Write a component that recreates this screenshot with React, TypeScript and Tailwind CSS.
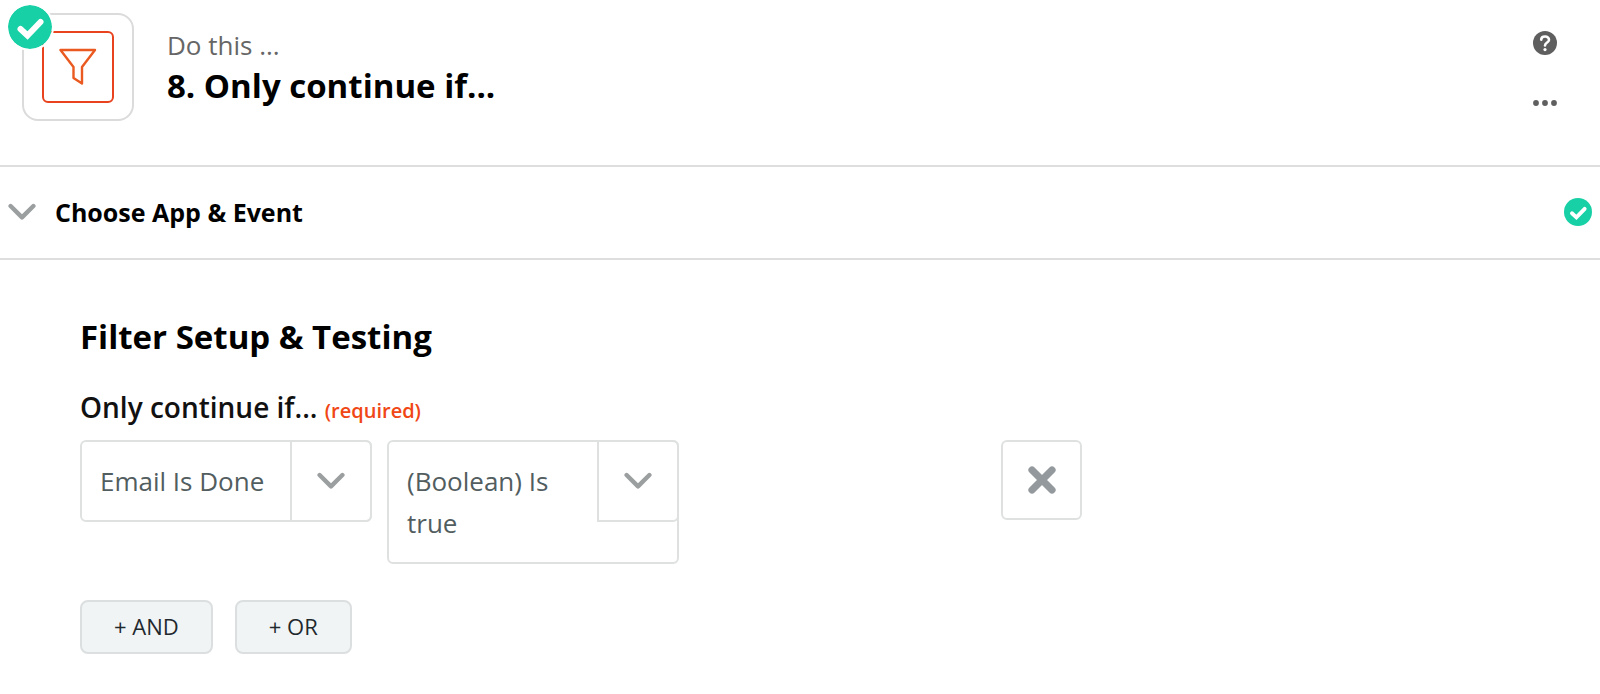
import React from "react";

function CheckBadge({ className }: { className: string }) {
  return (
    <svg viewBox="0 0 44 44" className={className} role="img" aria-label="Complete">
      <circle cx="22" cy="22" r="22" fill="#18d0a6" />
      <path
        d="M12.5 24l7 6.5L32.5 17"
        fill="none"
        stroke="#fff"
        strokeWidth="6"
        strokeLinecap="round"
        strokeLinejoin="miter"
      />
    </svg>
  );
}

function Chevron() {
  return (
    <svg viewBox="0 0 28 18" className="w-7 shrink-0" aria-hidden="true">
      <path
        d="M2.6 3L14 14.4L25.4 3"
        fill="none"
        stroke="#9c9fa0"
        strokeWidth="4.4"
        strokeLinecap="round"
        strokeLinejoin="round"
      />
    </svg>
  );
}

function FilterSelect({ label, options }: { label: string; options: string[] }) {
  return (
    <div className="relative">
      <select
        aria-label={label}
        className="block w-full appearance-none whitespace-normal rounded-md border-2 border-[#dfe1e1] bg-white py-[18px] pr-[100px] pl-[18px] text-[26px] leading-[42px] text-[#525d60]"
      >
        {options.map((option) => (
          <option key={option}>{option}</option>
        ))}
      </select>
      {/* arrow cell, keeps one row's height when the value wraps */}
      <span className="pointer-events-none absolute top-0 right-0 flex size-[82px] items-center justify-center rounded-r-md border-2 border-[#dfe1e1]">
        <Chevron />
      </span>
    </div>
  );
}

export default function App() {
  return (
    <main className="min-h-screen bg-white font-['Open_Sans',sans-serif] text-black">
      <header className="flex items-start border-b-2 border-[#dedede] pt-[13px] pr-[43px] pb-11 pl-[22px]">
        <div className="relative flex h-[108px] w-28 shrink-0 items-center justify-center rounded-2xl border-2 border-[#dbdbdb]">
          <div className="flex size-[72px] items-center justify-center rounded-md border-2 border-[#e8421e]">
            <svg viewBox="0 0 38 38" className="size-[38px]" aria-hidden="true">
              <path
                d="M1.5 2H36L23 19V35.5L14.5 30V19Z"
                fill="none"
                stroke="#ea5a20"
                strokeWidth="2.4"
                strokeLinejoin="round"
              />
            </svg>
          </div>
          <CheckBadge className="absolute -top-3 -left-[18px] size-12 rounded-full border-2 border-white" />
        </div>
        <div className="ml-[33px] pt-3.5">
          <p className="text-[26px] leading-9 text-[#666]">Do this ...</p>
          <h1 className="text-[33px] leading-[46px] font-bold">8. Only continue if...</h1>
        </div>
        <div className="ml-auto flex flex-col items-center gap-9 pt-[18px]">
          <button type="button" aria-label="Help" className="size-6">
            <svg viewBox="0 0 24 24" className="size-6">
              <circle cx="12" cy="12" r="12" fill="#5f5f5f" />
              <path
                d="M8.2 8.6C8.4 4.4 16.2 4.6 16 9C15.9 11.6 12 11.4 12 14.4"
                fill="none"
                stroke="#fff"
                strokeWidth="2.6"
                strokeLinecap="round"
              />
              <circle cx="12" cy="18.6" r="1.6" fill="#fff" />
            </svg>
          </button>
          <button type="button" aria-label="More options" className="size-6">
            <svg viewBox="0 0 24 24" className="size-6" fill="#5f5f5f">
              <circle cx="3" cy="12" r="2.9" />
              <circle cx="12" cy="12" r="2.9" />
              <circle cx="21" cy="12" r="2.9" />
            </svg>
          </button>
        </div>
      </header>

      <button
        type="button"
        className="flex h-[93px] w-full items-center border-b-2 border-[#dedede] px-2 pb-0.5 text-left"
      >
        <Chevron />
        <span className="ml-[19px] text-[25px] leading-9 font-bold">Choose App &amp; Event</span>
        <CheckBadge className="ml-auto size-7" />
      </button>

      <section className="px-20 pt-[54px] pb-10">
        <h2 className="text-[33px] leading-[46px] font-bold">Filter Setup &amp; Testing</h2>
        <p className="mt-[26px] text-[28px] leading-[42px] font-semibold text-[#111]">
          Only continue if... <span className="text-[20px] text-[#f04715]">(required)</span>
        </p>

        <div className="mt-2 grid max-w-[1002px] grid-cols-[1fr_1fr_1fr_81px] items-start gap-[15px]">
          <FilterSelect label="Field" options={["Email Is Done"]} />
          <FilterSelect label="Condition" options={["(Boolean) Is true"]} />
          <button
            type="button"
            aria-label="Remove condition"
            className="col-start-4 flex h-20 items-center justify-center rounded-md border-2 border-[#dfe1e1]"
          >
            <svg viewBox="0 0 28 28" className="size-7">
              <path d="M4 4L24 24M24 4L4 24" stroke="#93999c" strokeWidth="7.2" strokeLinecap="round" />
            </svg>
          </button>
        </div>

        <div className="mt-9 flex gap-[22px] text-[22px] leading-[48px] text-[#1f292e]">
          <button type="button" className="rounded-lg border-2 border-[#dcdfe0] bg-[#f1f4f5] px-8 pb-0.5">
            + AND
          </button>
          <button type="button" className="rounded-lg border-2 border-[#dcdfe0] bg-[#f1f4f5] px-8 pb-0.5">
            + OR
          </button>
        </div>
      </section>
    </main>
  );
}
